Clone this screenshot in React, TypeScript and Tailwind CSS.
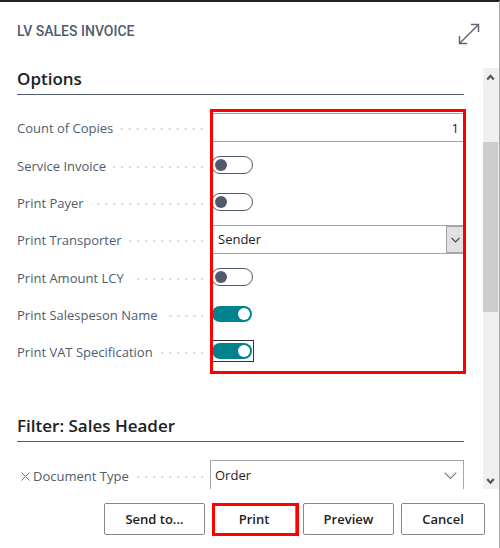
import { useState, type ReactNode } from "react";

const fieldBox =
  "block w-full appearance-none rounded-none border border-[#a6a6a6] bg-white text-[13px] text-[#212121] outline-none";

const footerButton = "h-8 rounded-[2px] border border-[#86878c] pt-px";

function SectionHeading({ children }: { children: ReactNode }) {
  return (
    <h2 className="h-[27px] border-b border-[#505c6d] text-[17px] leading-[22px] font-semibold text-[#212121]">
      {children}
    </h2>
  );
}

function FieldRow({
  id,
  label,
  removable = false,
  className = "h-[30px]",
  labelClassName = "",
  children,
}: {
  id: string;
  label: string;
  removable?: boolean;
  className?: string;
  labelClassName?: string;
  children: ReactNode;
}) {
  return (
    <div className={`flex items-center gap-[7px] ${className}`}>
      <div className={`flex w-[186px] shrink-0 items-center ${labelClassName}`}>
        {removable && (
          <button type="button" aria-label="Remove filter" className="mr-[3px] ml-1 shrink-0 text-[#6b7584]">
            <svg width="9" height="9" viewBox="0 0 9 9" fill="none" stroke="currentColor" className="block">
              <path d="M0.5 0.5L8.5 8.5M8.5 0.5L0.5 8.5" />
            </svg>
          </button>
        )}
        <label htmlFor={id} className="text-[13px] leading-5 whitespace-nowrap text-[#505c6d]">
          {label}
        </label>
        <span
          aria-hidden="true"
          className="mt-[2px] ml-[7px] h-[2px] flex-1 bg-[linear-gradient(to_left,#d6d6d6_2px,transparent_2px)] bg-[length:8px_2px] bg-right bg-repeat-x"
        />
      </div>
      <div className="flex h-full min-w-0 flex-1 items-center">{children}</div>
    </div>
  );
}

function ToggleRow({
  id,
  label,
  initial = false,
  focused = false,
}: {
  id: string;
  label: string;
  initial?: boolean;
  focused?: boolean;
}) {
  const [on, setOn] = useState(initial);
  return (
    <FieldRow id={id} label={label} labelClassName="pt-[2px]">
      <span className={`flex border py-px ${focused ? "border-[#333333]" : "border-transparent"}`}>
        <input
          id={id}
          type="checkbox"
          role="switch"
          checked={on}
          onChange={(e) => setOn(e.target.checked)}
          className="h-[18px] w-[42px] appearance-none rounded-full border border-[#505c6d] bg-white bg-clip-padding py-[2px] pr-[2px] pl-[3px] outline-none before:block before:h-3 before:w-3 before:rounded-full before:bg-[#505c6d] checked:border-transparent checked:bg-[#00838f] checked:before:ml-auto checked:before:bg-white"
        />
      </span>
    </FieldRow>
  );
}

export default function App() {
  return (
    <div className="flex h-screen flex-col border-t-2 border-r border-t-[#252423] border-r-[#a8a8a8] bg-white font-['Open_Sans','Noto_Sans',sans-serif]">
      <header className="flex h-[66px] shrink-0 items-start justify-between pt-[19px] pr-[19px] pl-[17px]">
        <h1 className="font-[Roboto,sans-serif] text-[14px] leading-5 font-medium text-[#505c6d]">LV SALES INVOICE</h1>
        <button type="button" aria-label="Expand" className="mt-[2px] text-[#5f6470]">
          <svg width="22" height="22" viewBox="0 0 22 22" fill="none" stroke="currentColor" className="block">
            <path d="M1.5 20.5L20.5 1.5" strokeWidth="1.4" />
            <path d="M13 1.5H20.5V9M1.5 13V20.5H9" strokeWidth="1.5" />
          </svg>
        </button>
      </header>

      <div className="flex min-h-0 flex-1">
        <main className="min-w-0 flex-1 overflow-hidden pr-[19px] pl-[17px]">
          <section>
            <SectionHeading>Options</SectionHeading>
            <div className="relative mt-[18px] flex flex-col gap-[7px]">
              <FieldRow id="copies" label="Count of Copies">
                <input
                  id="copies"
                  type="text"
                  inputMode="numeric"
                  defaultValue="1"
                  className={`${fieldBox} mb-px h-[29px] pr-1 text-right`}
                />
              </FieldRow>
              <ToggleRow id="service" label="Service Invoice" />
              <ToggleRow id="payer" label="Print Payer" />
              <FieldRow id="transporter" label="Print Transporter" className="mt-px h-[30px]">
                <div className="relative mb-px w-full">
                  <select id="transporter" className={`${fieldBox} h-[29px] pt-px pl-[7px]`}>
                    <option>Sender</option>
                    <option>Recipient</option>
                  </select>
                  <span className="pointer-events-none absolute inset-y-px right-0 flex w-[18px] items-center justify-center border border-[#a6a6a6] bg-[#e1e1e1] text-[#444444]">
                    <svg width="9" height="6" viewBox="0 0 9 6" fill="none" stroke="currentColor" strokeWidth="1.2">
                      <path d="M0.5 0.8L4.5 4.8L8.5 0.8" />
                    </svg>
                  </span>
                </div>
              </FieldRow>
              <ToggleRow id="lcy" label="Print Amount LCY" />
              <ToggleRow id="salesperson" label="Print Salespeson Name" initial />
              <ToggleRow id="vat" label="Print VAT Specification" initial focused />
              <div className="pointer-events-none absolute -top-1 -right-[2px] -bottom-2 left-[193px] border-[3px] border-[#ff0000]" />
            </div>
          </section>

          <section className="mt-[49px]">
            <SectionHeading>Filter: Sales Header</SectionHeading>
            <div className="mt-[18px]">
              <FieldRow id="doctype" label="Document Type" removable className="h-8">
                <div className="relative w-full">
                  <select id="doctype" className={`${fieldBox} h-8 pl-1`}>
                    <option>Order</option>
                    <option>Quote</option>
                    <option>Invoice</option>
                  </select>
                  <svg
                    width="13"
                    height="8"
                    viewBox="0 0 13 8"
                    fill="none"
                    stroke="#7d746c"
                    strokeWidth="1.1"
                    className="pointer-events-none absolute top-3 right-[7px]"
                  >
                    <path d="M0.7 0.7L6.5 6.5L12.3 0.7" />
                  </svg>
                </div>
              </FieldRow>
            </div>
          </section>
        </main>

        <div aria-hidden="true" className="flex w-4 shrink-0 flex-col items-center bg-[#f0f0f0] text-[#555555]">
          <svg width="16" height="17" viewBox="0 0 16 17" fill="none" stroke="currentColor" strokeWidth="2.2">
            <path d="M4.2 11.5L7.5 7.8L10.8 11.5" />
          </svg>
          <div className="mt-[57px] h-[170px] w-[15px] self-start bg-[#cdcdcd]" />
          <svg width="16" height="17" viewBox="0 0 16 17" fill="none" stroke="currentColor" strokeWidth="2.2" className="mt-auto">
            <path d="M4.2 7L7.5 10.7L10.8 7" />
          </svg>
        </div>
      </div>

      <footer className="flex h-[59px] shrink-0 items-start justify-end gap-[7px] pt-[14px] pr-[14px] text-[13px] font-semibold text-[#212121]">
        <button type="button" className={`${footerButton} w-[101px]`}>
          Send to...
        </button>
        <div className="relative">
          <button type="button" className={`${footerButton} w-[84px]`}>
            Print
          </button>
          <div className="pointer-events-none absolute top-0 -right-[3px] -bottom-px left-0 border-[3px] border-[#ff0000]" />
        </div>
        <button type="button" className={`${footerButton} w-[91px]`}>
          Preview
        </button>
        <button type="button" className={`${footerButton} w-[84px]`}>
          Cancel
        </button>
      </footer>
    </div>
  );
}
